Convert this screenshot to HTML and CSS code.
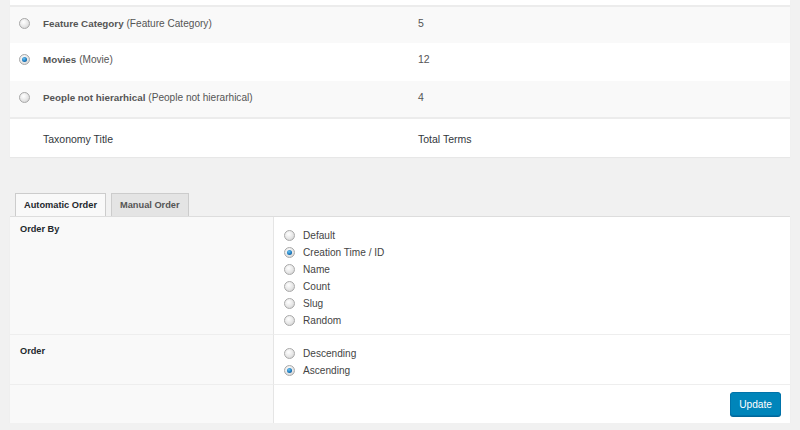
FILE: index.html
```html
<!DOCTYPE html>
<html lang="en">
<head>
    <meta charset="UTF-8">
    <title>Taxonomy Order</title>
    <link rel="stylesheet" href="styles.css">
</head>
<body>
  <div class="wrap">
    <table class="tax-table">
      <thead>
        <tr class="cut-row"><td colspan="3"></td></tr>
      </thead>
      <tbody>
        <tr class="alt row-a">
          <td class="check"><span class="radio"></span></td>
          <td class="name"><strong>Feature Category</strong> <span class="slug">(Feature Category)</span></td>
          <td class="count">5</td>
        </tr>
        <tr class="row-b">
          <td class="check"><span class="radio checked"></span></td>
          <td class="name"><strong>Movies</strong> <span class="slug">(Movie)</span></td>
          <td class="count">12</td>
        </tr>
        <tr class="alt row-a">
          <td class="check"><span class="radio"></span></td>
          <td class="name"><strong>People not hierarhical</strong> <span class="slug">(People not hierarhical)</span></td>
          <td class="count">4</td>
        </tr>
      </tbody>
      <tfoot>
        <tr>
          <td class="check"></td>
          <td class="name">Taxonomy Title</td>
          <td class="count">Total Terms</td>
        </tr>
      </tfoot>
    </table>

    <div class="tabs">
      <span class="tab active">Automatic Order</span>
      <span class="tab">Manual Order</span>
    </div>
    <div class="panel">
      <div class="label label-orderby">Order By</div>
      <div class="options">
        <div class="option"><span class="radio"></span>Default</div>
        <div class="option"><span class="radio checked"></span>Creation Time / ID</div>
        <div class="option"><span class="radio"></span>Name</div>
        <div class="option"><span class="radio"></span>Count</div>
        <div class="option"><span class="radio"></span>Slug</div>
        <div class="option"><span class="radio"></span>Random</div>
      </div>
      <div class="label label-order">Order</div>
      <div class="options">
        <div class="option"><span class="radio"></span>Descending</div>
        <div class="option"><span class="radio checked"></span>Ascending</div>
      </div>
      <div class="label"></div>
      <div class="actions">
        <button class="button-primary">Update</button>
      </div>
    </div>
  </div>
</body>
</html>
```

FILE: styles.css
```css
body {
    margin: 0;
    background-color: #f1f1f1;
    font-family: "Liberation Sans", Arial, sans-serif;
    font-size: 10.5px;
    color: #555;
}
.wrap {
    padding: 0 10px;
}
.tax-table {
    width: 100%;
    border-collapse: collapse;
    background-color: #fff;
    box-shadow: 0 1px 1px rgba(0, 0, 0, 0.04);
}
.tax-table td {
    padding: 0;
    vertical-align: top;
    box-sizing: border-box;
}
.cut-row td {
    height: 6px;
    border-bottom: 2px solid #ececec;
}
.tax-table tbody td {
    padding-top: 10px;
}
.tax-table tr.row-a td {
    height: 37px;
}
.tax-table tr.row-b td {
    height: 38px;
}
.tax-table tr.alt {
    background-color: #f9f9f9;
}
.tax-table td.check {
    width: 33px;
    padding-left: 9px;
    padding-top: 11px;
}
.tax-table td.name {
    width: 375px;
}
.tax-table strong {
    font-size: 9.8px;
    font-weight: 700;
}
.tax-table .slug {
    font-size: 10.1px;
}
.tax-table tfoot td {
    height: 39px;
    padding-top: 14px;
    border-top: 2px solid #ececec;
    color: #32373c;
}
.radio {
    display: inline-block;
    width: 9px;
    height: 9px;
    border-radius: 50%;
    border: 1px solid #a9a9a9;
    background: radial-gradient(circle at 40% 35%, #fff 0%, #e6e6e6 55%, #c8c8c8 100%);
    vertical-align: top;
    position: relative;
}
.radio.checked::after {
    content: "";
    position: absolute;
    left: 2px;
    top: 2px;
    width: 5px;
    height: 5px;
    border-radius: 50%;
    background: radial-gradient(circle at 40% 35%, #6fc3f0 0%, #1a7bc0 55%, #0a3f73 100%);
}
.tabs {
    display: flex;
    gap: 5px;
    margin-top: 36px;
    padding-left: 5px;
}
.tab {
    display: block;
    height: 23px;
    line-height: 23px;
    padding: 0 8px;
    box-sizing: border-box;
    border: 1px solid #ccc;
    border-bottom: none;
    background-color: #e4e4e4;
    font-size: 9.25px;
    font-weight: 700;
    color: #555;
}
.tab.active {
    background-color: #f9f9f9;
    color: #23282d;
}
.panel {
    display: grid;
    grid-template-columns: 264px 1fr;
    grid-template-rows: 118px 50px 38px;
    background-color: #fff;
    border-top: 1px solid #ddd;
    box-shadow: 0 1px 1px rgba(0, 0, 0, 0.06);
}
.label {
    background-color: #f9f9f9;
    border-right: 1px solid #e5e5e5;
    border-bottom: 1px solid #eee;
    padding: 7px 10px;
    font-size: 9.2px;
    font-weight: 700;
    color: #23282d;
}
.label-order {
    padding-top: 11px;
}
.panel > div:nth-last-child(-n+2) {
    border-bottom: none;
}
.options {
    border-bottom: 1px solid #eee;
    padding: 10px 10px 0;
}
.option {
    height: 17px;
    line-height: 17px;
    font-size: 10.1px;
    color: #444;
}
.option .radio {
    margin: 3px 8px 0 0;
}
.actions {
    display: flex;
    justify-content: flex-end;
    padding: 7px 9px 0 0;
}
.button-primary {
    height: 24px;
    padding: 0 8px;
    background-color: #0085ba;
    border: 1px solid #0073aa;
    border-radius: 3px;
    box-shadow: 0 1px 0 #006799;
    color: #fff;
    font-family: "Liberation Sans", Arial, sans-serif;
    font-size: 10.2px;
    cursor: pointer;
}
```
